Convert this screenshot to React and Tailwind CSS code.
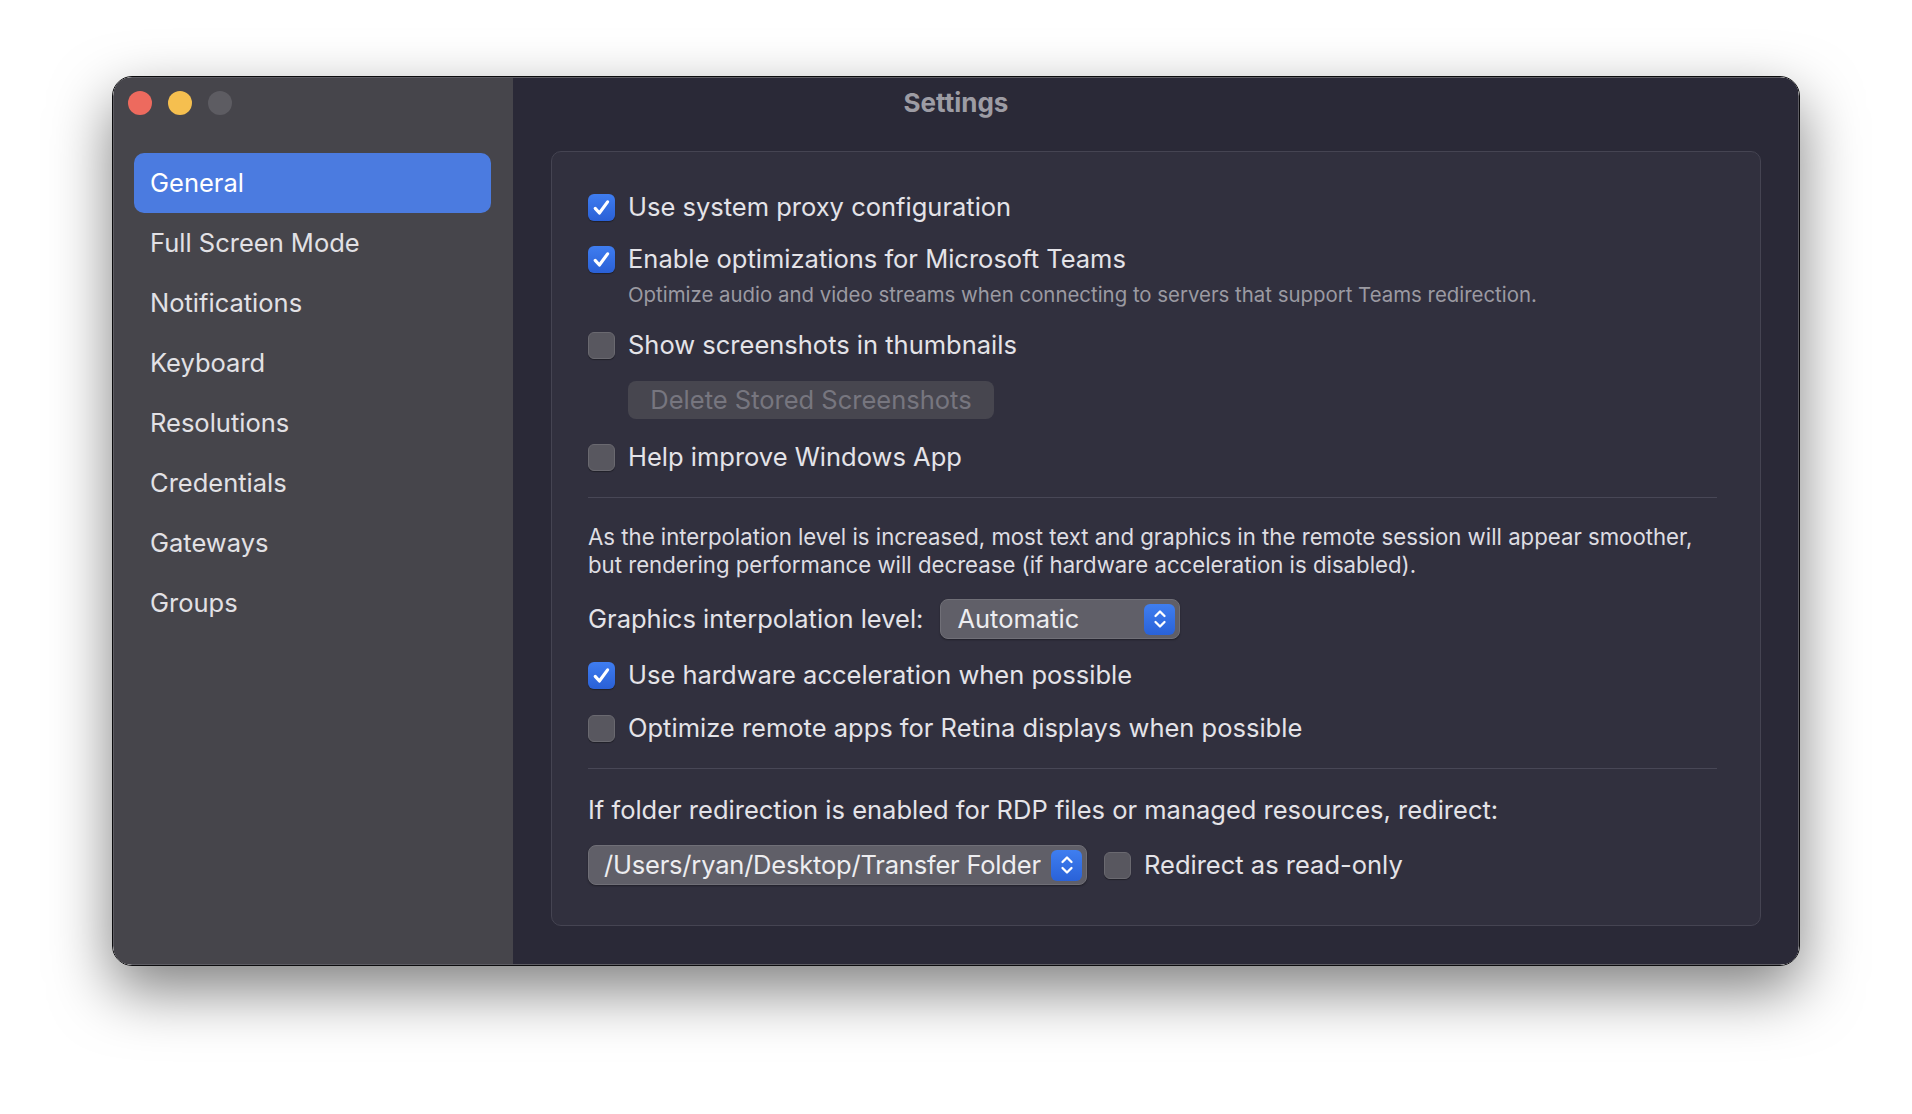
import React from 'react';

const navItems = [
  'General',
  'Full Screen Mode',
  'Notifications',
  'Keyboard',
  'Resolutions',
  'Credentials',
  'Gateways',
  'Groups',
];

const Checkbox = ({ checked }) =>
  checked ? (
    <span className="flex h-[27px] w-[27px] shrink-0 items-center justify-center rounded-[6px] bg-gradient-to-b from-[#3f7df0] to-[#2a60d6] shadow-[0_1px_1px_rgba(0,0,0,0.35)]">
      <svg width="21" height="21" viewBox="0 0 20 20" fill="none">
        <path
          d="M4 10.8 L8 15.2 L15.8 4.6"
          stroke="white"
          strokeWidth="3"
          strokeLinecap="round"
          strokeLinejoin="round"
        />
      </svg>
    </span>
  ) : (
    <span className="h-[27px] w-[27px] shrink-0 rounded-[6px] border border-[#6a6970] bg-[#58575f] shadow-[0_1px_1px_rgba(0,0,0,0.35)]" />
  );

const CheckRow = ({ checked, label, className = '' }) => (
  <label className={`flex h-[36px] items-center gap-[13px] ${className}`}>
    <Checkbox checked={checked} />
    <span className="whitespace-nowrap text-[25.5px] leading-none text-[#e4e3e8]">{label}</span>
  </label>
);

const Stepper = () => (
  <span className="flex h-[31px] w-[31px] shrink-0 items-center justify-center rounded-[6px] bg-gradient-to-b from-[#3f7ef0] to-[#2a62d8]">
    <svg width="16" height="24" viewBox="0 0 16 24" fill="none">
      <path d="M3.5 9 L8 4.5 L12.5 9" stroke="white" strokeWidth="2.3" strokeLinecap="round" strokeLinejoin="round" />
      <path d="M3.5 15 L8 19.5 L12.5 15" stroke="white" strokeWidth="2.3" strokeLinecap="round" strokeLinejoin="round" />
    </svg>
  </span>
);

const Select = ({ value, className = '', textClass = '' }) => (
  <div
    className={`flex h-[40px] items-center justify-between gap-[4px] rounded-[8px] border border-[#706f77] bg-[#605f68] pr-[4px] shadow-[0_1px_2px_rgba(0,0,0,0.35)] ${className}`}
  >
    <span className={`whitespace-nowrap text-[25.5px] leading-none text-[#ededf0] ${textClass}`}>{value}</span>
    <Stepper />
  </div>
);

const Divider = ({ className = '' }) => (
  <div className={`h-px bg-[#484756] ${className}`} />
);

export default function App() {
  return (
    <div className="min-h-[1114px] bg-white pl-[112px] pt-[76px] font-['Inter','Noto_Sans',sans-serif] antialiased">
      <div className="h-[890px] w-[1688px] overflow-hidden rounded-[20px] border border-[#0c0c0e] shadow-[0_24px_60px_rgba(0,0,0,0.5)]">
        <div className="flex h-full rounded-[19px] border border-[#5e5d64]">
          {/* sidebar */}
          <aside className="flex w-[399px] shrink-0 flex-col bg-[#46454b] pl-[20px] pr-[22px] pt-[13px]">
            <div className="flex gap-[16px]">
              <span className="ml-[-6px] h-[24px] w-[24px] rounded-full bg-[#ed6a5e]" />
              <span className="h-[24px] w-[24px] rounded-full bg-[#f5bf4f]" />
              <span className="h-[24px] w-[24px] rounded-full bg-[#5d5c62]" />
            </div>
            <nav className="mt-[38px] flex flex-col">
              {navItems.map((item, i) => (
                <div
                  key={item}
                  className={`flex h-[60px] items-center rounded-[10px] pl-[16px] text-[25.5px] ${
                    i === 0 ? 'bg-[#4b7be0] text-white' : 'text-[#e2e1e5]'
                  }`}
                >
                  {item}
                </div>
              ))}
            </nav>
          </aside>

          {/* content */}
          <main className="flex flex-1 flex-col bg-[#2a2937] pl-[38px] pr-[37px] pb-[38px]">
            <div className="flex h-[73px] items-start justify-center pr-[400px] pt-[11px]">
              <span className="text-[26px] font-bold leading-[28px] text-[#9d9ca4]">Settings</span>
            </div>

            <section className="flex flex-1 flex-col rounded-[10px] border border-[#454452] bg-[#31303e] pl-[36px] pr-[43px] pt-[37px]">
              <CheckRow checked label="Use system proxy configuration" />
              <CheckRow checked label="Enable optimizations for Microsoft Teams" className="mt-[16px]" />
              <p className="ml-[40px] mt-[4px] text-[20.4px] leading-[28px] text-[#9b9aa2]">
                Optimize audio and video streams when connecting to servers that support Teams redirection.
              </p>
              <CheckRow label="Show screenshots in thumbnails" className="mt-[18px]" />
              <div className="ml-[40px] mt-[18px]">
                <button className="flex h-[38px] w-[366px] items-center justify-center rounded-[8px] bg-[#47464f] text-[25.5px] leading-none text-[#77767f]">
                  Delete Stored Screenshots
                </button>
              </div>
              <CheckRow label="Help improve Windows App" className="mt-[20px]" />

              <Divider className="mt-[22px]" />

              <p className="mt-[25px] text-[22.2px] leading-[28px] text-[#dedde2]">
                As the interpolation level is increased, most text and graphics in the remote session will appear smoother,
                <br />
                but rendering performance will decrease (if hardware acceleration is disabled).
              </p>

              <div className="mt-[20px] flex items-center gap-[17px]">
                <span className="text-[25.5px] leading-none text-[#e4e3e8]">Graphics interpolation level:</span>
                <Select value="Automatic" className="w-[240px] pl-[16px]" />
              </div>

              <CheckRow checked label="Use hardware acceleration when possible" className="mt-[18px]" />
              <CheckRow label="Optimize remote apps for Retina displays when possible" className="mt-[17px]" />

              <Divider className="mt-[22px]" />

              <p className="mt-[25px] text-[25.5px] leading-[32px] text-[#e4e3e8]">
                If folder redirection is enabled for RDP files or managed resources, redirect:
              </p>

              <div className="mt-[19px] flex items-center">
                <Select
                  value="/Users/ryan/Desktop/Transfer Folder"
                  className="w-[499px] pl-[15px]"
                  textClass="tracking-[-0.2px]"
                />
                <CheckRow label="Redirect as read-only" className="ml-[17px]" />
              </div>
            </section>
          </main>
        </div>
      </div>
    </div>
  );
}
